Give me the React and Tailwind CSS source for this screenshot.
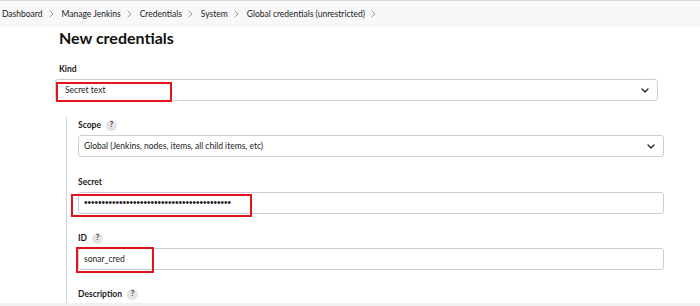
import React from "react";

const font = { fontFamily: "Lato, 'Noto Sans', sans-serif" };

function Chevron() {
  return (
    <svg width="8" height="5" viewBox="0 0 8 5" fill="none">
      <path d="M1 1l3 3 3-3" stroke="#222" strokeWidth="1.3" strokeLinecap="round" strokeLinejoin="round" />
    </svg>
  );
}

function Sep() {
  return (
    <svg className="ml-[6px] mr-[8px]" width="5" height="8" viewBox="0 0 5 8" fill="none">
      <path d="M1 1l3 3-3 3" stroke="#9a9a9e" strokeWidth="1" strokeLinecap="round" strokeLinejoin="round" />
    </svg>
  );
}

function Help() {
  return (
    <span className="ml-[5px] inline-flex h-[11px] w-[11px] items-center justify-center rounded-full bg-[#e4e4e6] text-[7.5px] font-bold leading-none text-[#333]">
      ?
    </span>
  );
}

function Label({ children, help }) {
  return (
    <div className="flex h-[16px] items-center text-[8.5px] font-bold text-[#1a1a1a]">
      {children}
      {help && <Help />}
    </div>
  );
}

function Crumb({ children }) {
  return (
    <>
      <span>{children}</span>
      <Sep />
    </>
  );
}

export default function App() {
  return (
    <div className="relative h-[306px] w-[700px] overflow-hidden bg-white" style={font}>
      <div className="flex h-[27px] items-center border-t border-[#d8d8da] bg-[#f8f8f9] pl-[2px] text-[8.5px] text-[#1a1a1a]">
        <Crumb>Dashboard</Crumb>
        <Crumb>Manage Jenkins</Crumb>
        <Crumb>Credentials</Crumb>
        <Crumb>System</Crumb>
        <Crumb>Global credentials (unrestricted)</Crumb>
      </div>

      <div className="pl-[55px]">
        <h1 className="ml-[4px] mt-[1px] h-[20px] text-[16px] font-bold leading-[20px] text-[#111]">New credentials</h1>

        <div className="ml-[4px] mt-[13px] flex h-[16px] items-center text-[8.5px] font-bold text-[#1a1a1a]">Kind</div>
        <div className="relative mt-[2px] flex h-[22px] w-[603px] items-center justify-between rounded-[3px] border border-[#c9ced4] pl-[9px] pr-[8px] text-[8.5px] text-[#1a1a1a]">
          <span>Secret text</span>
          <Chevron />
          <div className="absolute left-[0px] top-[2px] h-[20px] w-[116px] border-2 border-[#e3141b]" />
        </div>

        <div className="ml-[11px] mt-[16px] w-[597px] border-l border-[#cfd2d6] pl-[11px]">
          <Label help>Scope</Label>
          <div className="mt-[2px] flex h-[22px] w-[586px] items-center justify-between rounded-[3px] border border-[#c9ced4] pl-[5px] pr-[8px] text-[8.5px] text-[#1a1a1a]">
            <span>Global (Jenkins, nodes, items, all child items, etc)</span>
            <Chevron />
          </div>

          <div className="mt-[17px]">
            <Label>Secret</Label>
          </div>
          <div className="relative mt-[2px] flex h-[22px] w-[586px] items-center rounded-[3px] border border-[#c9ced4] pl-[5px] text-[10px] text-[#1a1a1a]" style={{ fontFamily: "'Liberation Sans', sans-serif" }}>
            <span className="leading-none">{"•".repeat(42)}</span>
            <div className="absolute left-[-8px] top-[1px] h-[23px] w-[181px] border-2 border-[#e3141b]" />
          </div>

          <div className="mt-[16px]">
            <Label help>ID</Label>
          </div>
          <div className="relative mt-[2px] flex h-[22px] w-[586px] items-center rounded-[3px] border border-[#c9ced4] pl-[5px] text-[8.5px] text-[#1a1a1a]">
            <span>sonar_cred</span>
            <div className="absolute left-[-3px] top-[-2px] h-[26px] w-[78px] border-2 border-[#e3141b]" />
          </div>

          <div className="mt-[16px]">
            <Label help>Description</Label>
          </div>
          <div className="mt-[1px] h-[30px] w-[586px] rounded-[3px] border-2 border-[#a9cbe3]" />
        </div>
      </div>

      <div className="absolute bottom-0 left-0 h-[3px] w-full bg-[#f0f0f1]" />
    </div>
  );
}
